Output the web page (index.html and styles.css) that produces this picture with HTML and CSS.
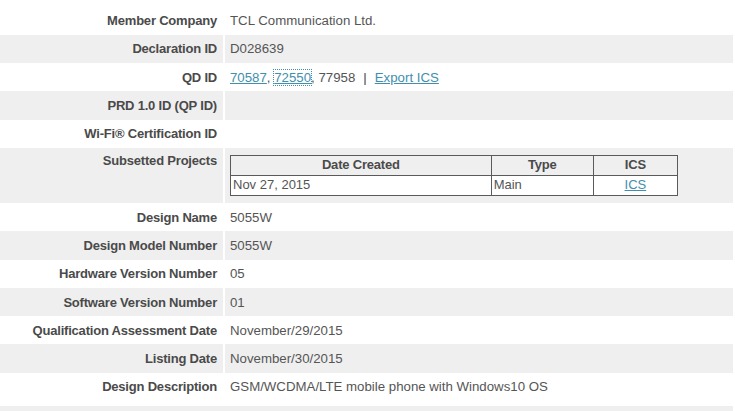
FILE: index.html
```html
<!DOCTYPE html>
<html>
<head>
<meta charset="utf-8">
<link rel="stylesheet" href="styles.css">
</head>
<body>
<div class="details">
  <div class="row">
    <div class="label">Member Company</div>
    <div class="value">TCL Communication Ltd.</div>
  </div>
  <div class="row alt">
    <div class="label">Declaration ID</div>
    <div class="value">D028639</div>
  </div>
  <div class="row">
    <div class="label">QD ID</div>
    <div class="value"><a href="#" class="link">70587</a>, <a href="#" class="link focused">72550</a>, 77958<span class="sep">|</span><a href="#" class="link">Export ICS</a></div>
  </div>
  <div class="row alt">
    <div class="label">PRD 1.0 ID (QP ID)</div>
    <div class="value"></div>
  </div>
  <div class="row">
    <div class="label">Wi-Fi® Certification ID</div>
    <div class="value"></div>
  </div>
  <div class="row alt tall">
    <div class="label top">Subsetted Projects</div>
    <div class="value top">
      <table class="sub">
        <thead>
          <tr><th class="c-date">Date Created</th><th class="c-type">Type</th><th class="c-ics">ICS</th></tr>
        </thead>
        <tbody>
          <tr><td>Nov 27, 2015</td><td>Main</td><td class="center"><a href="#" class="link">ICS</a></td></tr>
        </tbody>
      </table>
    </div>
  </div>
  <div class="row">
    <div class="label">Design Name</div>
    <div class="value">5055W</div>
  </div>
  <div class="row alt">
    <div class="label">Design Model Number</div>
    <div class="value">5055W</div>
  </div>
  <div class="row">
    <div class="label">Hardware Version Number</div>
    <div class="value">05</div>
  </div>
  <div class="row alt">
    <div class="label">Software Version Number</div>
    <div class="value">01</div>
  </div>
  <div class="row">
    <div class="label">Qualification Assessment Date</div>
    <div class="value">November/29/2015</div>
  </div>
  <div class="row alt">
    <div class="label">Listing Date</div>
    <div class="value">November/30/2015</div>
  </div>
  <div class="row last">
    <div class="label">Design Description</div>
    <div class="value">GSM/WCDMA/LTE mobile phone with Windows10 OS</div>
  </div>
  <div class="footer-bar"></div>
</div>
</body>
</html>
```
FILE: styles.css
```css
html, body {
  margin: 0;
  padding: 0;
  background: #fff;
}
body {
  font-family: "Liberation Sans", Arial, sans-serif;
  font-size: 13.25px;
  color: #555;
  overflow: hidden;
}
.details {
  padding-top: 6.5px;
  width: 733px;
}
.row {
  display: grid;
  grid-template-columns: 223px 1fr;
  height: 28.3px;
}
.row.alt {
  background: #efefef;
}
.row.tall {
  height: 55px;
}
.row.last {
  height: 33px;
}
.footer-bar {
  height: 12px;
  background: #efefef;
}
.label {
  display: flex;
  align-items: center;
  justify-content: flex-end;
  padding-right: 6px;
  font-size: 13px;
  font-weight: bold;
  color: #4a4a4a;
  letter-spacing: -0.2px;
  white-space: nowrap;
}
.row.last .label, .row.last .value {
  align-items: flex-start;
  padding-top: 6px;
}
.value {
  display: flex;
  align-items: center;
  padding-left: 5px;
  border-left: 2px solid #fff;
  white-space: pre;
}
.label.top {
  align-items: flex-start;
  padding-top: 5px;
}
.value.top {
  align-items: flex-start;
  padding-top: 7px;
}
.link {
  color: #3f8fae;
  text-decoration: underline;
}
.focused {
  outline: 1px dotted #3f8fae;
}
.sep {
  color: #444;
  padding: 0 8px 0 8px;
}
.sub {
  border-collapse: collapse;
  width: 448px;
  border: 1px solid #5a5a5a;
  font-size: 13px;
  color: #555;
}
.sub th, .sub td {
  border: 1px solid #5a5a5a;
  height: 19px;
  padding: 0 2px;
  line-height: 18px;
}
.sub th {
  background: #efefef;
  font-weight: bold;
  text-align: center;
  color: #4a4a4a;
  letter-spacing: -0.2px;
}
.sub td {
  background: #fff;
  text-align: left;
}
.sub td.center {
  text-align: center;
}
.c-date { width: 258px; }
.c-type { width: 98px; }
.c-ics { width: 80px; }
```
